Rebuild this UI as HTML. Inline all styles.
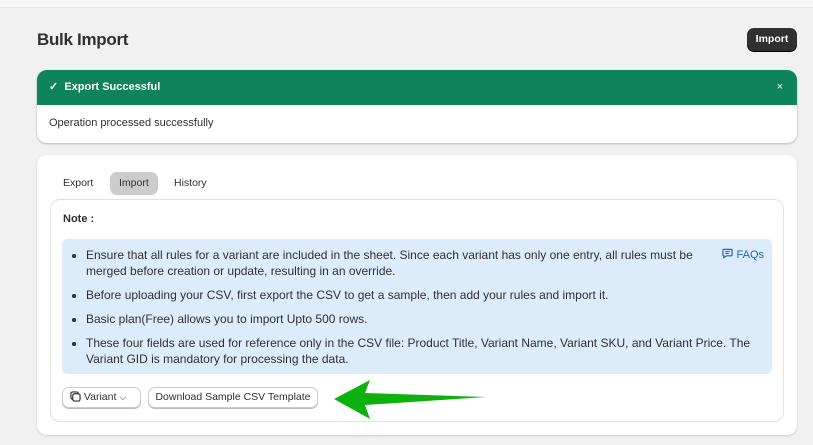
<!DOCTYPE html>
<html><head><style>
*{box-sizing:border-box;margin:0;padding:0}
body{width:813px;height:445px;background:#f1f1f1;font-family:"Liberation Sans",sans-serif;color:#303030;position:relative;overflow:hidden;font-size:11px}
.top{position:absolute;left:0;top:0;width:813px;height:8px;background:#f6f6f6;border-bottom:1px solid #e6e6e6}
h1{position:absolute;left:37px;top:30px;font-size:17px;font-weight:bold;color:#303030;letter-spacing:-0.3px}
.btn-dark{position:absolute;left:747px;top:28px;width:50px;height:23px;background:#303030;color:#fff;border-radius:7px;font-size:10.5px;font-weight:bold;text-align:center;line-height:22px;box-shadow:0 1px 0 #000}
.banner{position:absolute;left:37px;top:70px;width:760px;height:73px;background:#fff;border-radius:10px;overflow:hidden;box-shadow:0 1px 2px rgba(0,0,0,.25)}
.bh{height:35px;background:#0f845c;color:#fff;font-weight:bold;font-size:11px;line-height:35px;padding-left:12px}
.bh .x{position:absolute;right:14px;top:0;font-weight:normal}
.bb{padding:12px 12px;font-size:11px}
.card{position:absolute;left:37px;top:155px;width:760px;height:280px;background:#fff;border-radius:10px;box-shadow:0 1px 2px rgba(0,0,0,.15)}
.tab{position:absolute;top:17px;height:23px;line-height:23px;font-size:10.5px;padding:0 9px;border-radius:7px}
.inner{position:absolute;left:13px;top:44px;width:734px;height:223px;border:1px solid #e3e3e3;border-radius:10px}
.note{position:absolute;left:12px;top:13px;font-weight:bold;font-size:11px}
.blue{position:absolute;left:11px;top:39px;width:710px;height:135px;background:#dcecfb;border-radius:5px}
.blue ul{position:absolute;left:24px;top:8px;width:672px;font-size:12px;line-height:16px}
.blue li{margin-bottom:8px;padding-left:0}
.faq{position:absolute;right:8px;top:9px;color:#2463c0;font-size:11px}
.b{position:absolute;top:187px;height:21px;line-height:19px;border:1px solid #ccc;border-radius:7px;background:#fff;font-size:10.5px;box-shadow:0 1px 0 #bbb}
</style></head><body>
<div class="top"></div>
<h1>Bulk Import</h1>
<div class="btn-dark">Import</div>
<div class="banner"><div class="bh">✓&nbsp; Export Successful<span class="x">×</span></div><div class="bb">Operation processed successfully</div></div>
<div class="card">
<div class="tab" style="left:17px">Export</div>
<div class="tab" style="left:73px;background:#cccccc">Import</div>
<div class="tab" style="left:128px">History</div>
<div class="inner">
<div class="note">Note :</div>
<div class="blue">
<ul>
<li>Ensure that all rules for a variant are included in the sheet. Since each variant has only one entry, all rules must be<br>merged before creation or update, resulting in an override.</li>
<li>Before uploading your CSV, first export the CSV to get a sample, then add your rules and import it.</li>
<li>Basic plan(Free) allows you to import Upto 500 rows.</li>
<li>These four fields are used for reference only in the CSV file: Product Title, Variant Name, Variant SKU, and Variant Price. The Variant GID is mandatory for processing the data.</li>
</ul>
<div class="faq"><svg width="11" height="11" viewBox="0 0 12 12" style="vertical-align:-1px"><path d="M2 1.5h8a1 1 0 0 1 1 1v5a1 1 0 0 1-1 1H5l-3 2v-2a1 1 0 0 1-1-1v-5a1 1 0 0 1 1-1z" fill="none" stroke="#2463c0" stroke-width="1.3"/><path d="M3.5 4h5M3.5 6h4" stroke="#2463c0" stroke-width="1.1"/></svg> FAQs</div>
</div>
<div class="b" style="left:11px;width:79px;padding-left:7px"><svg width="11" height="11" viewBox="0 0 12 12" style="vertical-align:-2px"><rect x="1" y="1" width="8" height="8" rx="2" fill="none" stroke="#303030" stroke-width="1.3"/><rect x="3" y="3" width="8" height="8" rx="2" fill="#fff" stroke="#303030" stroke-width="1.3"/></svg> Variant <span style="font-size:9px">⌵</span></div>
<div class="b" style="left:97px;width:170px;text-align:center">Download Sample CSV Template</div>
</div>
</div>
<svg style="position:absolute;left:0;top:0" width="813" height="445"><polygon points="334,399 370,380 365,393 486,397 365,405 370,419" fill="#0db10d"/></svg>
</body></html>
